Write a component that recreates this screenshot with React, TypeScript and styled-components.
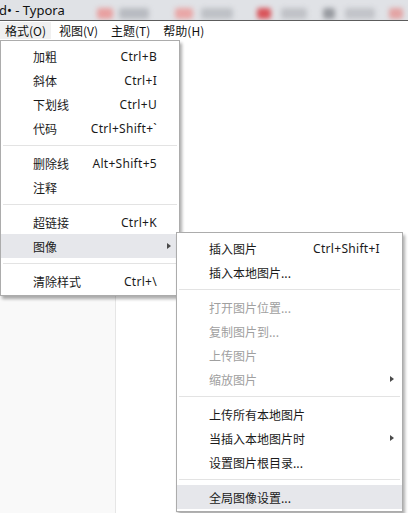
import React from "react";
import styled, { createGlobalStyle } from "styled-components";

type Entry =
  | { kind: "item"; label: string; shortcut?: string; sub?: boolean; disabled?: boolean; active?: boolean }
  | { kind: "sep" };

const formatMenu: Entry[] = [
  { kind: "item", label: "加粗", shortcut: "Ctrl+B" },
  { kind: "item", label: "斜体", shortcut: "Ctrl+I" },
  { kind: "item", label: "下划线", shortcut: "Ctrl+U" },
  { kind: "item", label: "代码", shortcut: "Ctrl+Shift+`" },
  { kind: "sep" },
  { kind: "item", label: "删除线", shortcut: "Alt+Shift+5" },
  { kind: "item", label: "注释" },
  { kind: "sep" },
  { kind: "item", label: "超链接", shortcut: "Ctrl+K" },
  { kind: "item", label: "图像", sub: true, active: true },
  { kind: "sep" },
  { kind: "item", label: "清除样式", shortcut: "Ctrl+\\" },
];

const imageMenu: Entry[] = [
  { kind: "item", label: "插入图片", shortcut: "Ctrl+Shift+I" },
  { kind: "item", label: "插入本地图片..." },
  { kind: "sep" },
  { kind: "item", label: "打开图片位置...", disabled: true },
  { kind: "item", label: "复制图片到...", disabled: true },
  { kind: "item", label: "上传图片", disabled: true },
  { kind: "item", label: "缩放图片", disabled: true, sub: true },
  { kind: "sep" },
  { kind: "item", label: "上传所有本地图片" },
  { kind: "item", label: "当插入本地图片时", sub: true },
  { kind: "item", label: "设置图片根目录..." },
  { kind: "sep" },
  { kind: "item", label: "全局图像设置...", active: true },
];

const topMenus = [
  { label: "格式(O)", open: true },
  { label: "视图(V)" },
  { label: "主题(T)" },
  { label: "帮助(H)" },
];

// blurred browser tabs behind the title text
const tabBlobs = [
  { w: 16, c: "#e8a0a0", gap: 32 },
  { w: 30, c: "#b8bbc1", gap: 6 },
  { w: 18, c: "#e9a6a6", gap: 26 },
  { w: 32, c: "#bec1c6", gap: 8 },
  { w: 14, c: "#d9545a", gap: 24 },
  { w: 26, c: "#c0c2c7", gap: 10 },
  { w: 12, c: "#979aa0", gap: 16 },
  { w: 30, c: "#c2c4c9", gap: 10 },
  { w: 14, c: "#e3a3a3", gap: 14 },
];

export default function App() {
  return (
    <>
      <GlobalStyle />
      <Window>
        <TitleBar>
          <TitleText>d• - Typora</TitleText>
          <Tabs>
            {tabBlobs.map((b, i) => (
              <Blob key={i} $w={b.w} $c={b.c} $gap={b.gap} />
            ))}
          </Tabs>
        </TitleBar>
        <MenuBar>
          {topMenus.map((m) => (
            <TopItem key={m.label} $open={!!m.open}>
              {m.label}
            </TopItem>
          ))}
        </MenuBar>
        <Body>
          <Sidebar />
          <Editor />
        </Body>

        <Menu $top={40} $left={0} $width={180}>
          <MenuList entries={formatMenu} />
        </Menu>
        <Menu $top={232} $left={176} $width={227}>
          <MenuList entries={imageMenu} />
        </Menu>
      </Window>
    </>
  );
}

const MenuList: React.FC<{ entries: Entry[] }> = ({ entries }) => (
  <>
    {entries.map((e, i) =>
      e.kind === "sep" ? (
        <Separator key={i} />
      ) : (
        <Item key={i} $active={!!e.active} $disabled={!!e.disabled}>
          <span>{e.label}</span>
          {e.shortcut && <Shortcut>{e.shortcut}</Shortcut>}
          {e.sub && <Arrow />}
        </Item>
      )
    )}
  </>
);

const GlobalStyle = createGlobalStyle`
  html, body {
    margin: 0;
    padding: 0;
    overflow: hidden;
    background: #ffffff;
  }
  body {
    font-family: "Noto Sans CJK SC", "Noto Sans", sans-serif;
    color: #1a1a1a;
  }
`;

const Window = styled.div`
  position: relative;
  width: 408px;
  height: 513px;
  display: flex;
  flex-direction: column;
  overflow: hidden;
`;

const TitleBar = styled.div`
  height: 20px;
  flex: none;
  display: flex;
  align-items: center;
  background: #e0e2e6;
  border-bottom: 1px solid #5c5c5c;
  overflow: hidden;
`;

const TitleText = styled.div`
  font-family: "Noto Sans", sans-serif;
  font-size: 13px;
  line-height: 20px;
  color: #111;
  margin-left: -1px;
  white-space: nowrap;
`;

const Tabs = styled.div`
  display: flex;
  align-items: flex-end;
  height: 100%;
  padding-bottom: 1px;
  box-sizing: border-box;
  filter: blur(2.5px);
`;

const Blob = styled.span<{ $w: number; $c: string; $gap: number }>`
  display: block;
  width: ${(p) => p.$w}px;
  height: 11px;
  margin-left: ${(p) => p.$gap}px;
  background: ${(p) => p.$c};
  border-radius: 3px;
`;

const MenuBar = styled.div`
  height: 19px;
  flex: none;
  display: flex;
  align-items: center;
  background: #ffffff;
`;

const TopItem = styled.div<{ $open: boolean }>`
  height: 17px;
  padding: 0 5px;
  margin-right: 3px;
  display: flex;
  align-items: center;
  font-size: 12px;
  color: #111;
  background: ${(p) => (p.$open ? "#f0f0f0" : "transparent")};
`;

const Body = styled.div`
  flex: 1;
  display: flex;
`;

const Sidebar = styled.div`
  width: 115px;
  background: #f9f9f9;
  border-right: 1px solid #e6e6e6;
`;

const Editor = styled.div`
  flex: 1;
  background: #ffffff;
`;

const Menu = styled.div<{ $top: number; $left: number; $width: number }>`
  position: absolute;
  top: ${(p) => p.$top}px;
  left: ${(p) => p.$left}px;
  width: ${(p) => p.$width}px;
  box-sizing: border-box;
  padding: 3px 0 2px;
  background: #ffffff;
  border: 1px solid #acacac;
  box-shadow: 2px 3px 3px rgba(0, 0, 0, 0.32);
`;

const Item = styled.div<{ $active: boolean; $disabled: boolean }>`
  position: relative;
  height: 24px;
  display: flex;
  align-items: center;
  justify-content: space-between;
  padding: 0 22px 0 32px;
  font-size: 12px;
  white-space: nowrap;
  color: ${(p) => (p.$disabled ? "#a0a0a0" : "#1a1a1a")};
  background: ${(p) => (p.$active ? "#e6e7eb" : "transparent")};
`;

const Shortcut = styled.span`
  font-family: "Noto Sans", sans-serif;
  font-size: 12px;
  letter-spacing: 0.3px;
`;

const Arrow = styled.span`
  position: absolute;
  right: 8px;
  top: 9px;
  width: 0;
  height: 0;
  border-top: 3.5px solid transparent;
  border-bottom: 3.5px solid transparent;
  border-left: 4px solid #4a4a4a;
`;

const Separator = styled.div`
  height: 11px;
  display: flex;
  align-items: center;
  padding: 0 2px;

  &::after {
    content: "";
    flex: 1;
    height: 1px;
    background: #e3e3e3;
  }
`;
